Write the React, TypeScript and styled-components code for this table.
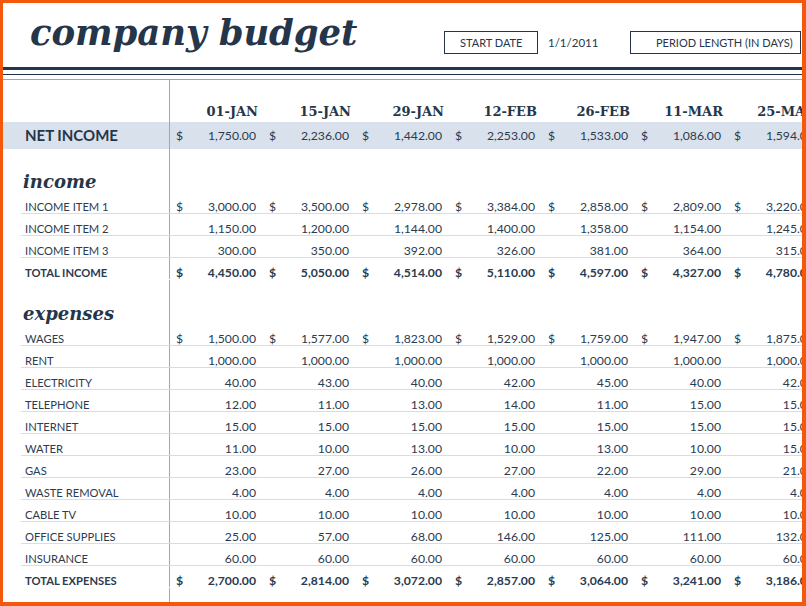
import React from 'react';
import styled, { createGlobalStyle, css } from 'styled-components';

const NAVY = '#25364a';
const TEXT = '#2b3b50';
const GRID = '#a6a6a6';
const RULE = '#d5dde8';

const GlobalStyle = createGlobalStyle`
  html, body { margin: 0; padding: 0; background: #fff; }
  body { font-family: Lato, "Liberation Sans", sans-serif; color: ${TEXT}; }
`;

const Frame = styled.div`
  width: 806px;
  height: 606px;
  box-sizing: border-box;
  border-style: solid;
  border-color: #f4580c;
  border-width: 3px 4px 4px 3px;
  overflow: hidden;
  background: #fff;
  display: flex;
  flex-direction: column;
`;

const Header = styled.header`
  display: flex;
  align-items: flex-start;
  height: 64px;
  box-sizing: border-box;
  padding: 28px 0 0 27px;
  flex-shrink: 0;
`;

const Title = styled.h1`
  margin: -18px 0 0;
  width: 414px;
  flex-shrink: 0;
  font-family: "DejaVu Serif", Georgia, serif;
  font-style: italic;
  font-weight: bold;
  font-size: 35.5px;
  letter-spacing: -0.1px;
  line-height: 40px;
  color: ${NAVY};
  white-space: nowrap;
`;

const FieldBox = styled.div<{ $w: number; $pl: number }>`
  width: ${(p) => p.$w}px;
  height: 23px;
  box-sizing: border-box;
  flex-shrink: 0;
  border: 1px solid ${NAVY};
  padding-left: ${(p) => p.$pl}px;
  font-size: 11px;
  line-height: 21px;
  color: ${NAVY};
  white-space: nowrap;
`;

const FieldValue = styled.div`
  width: 82px;
  flex-shrink: 0;
  padding-left: 10px;
  font-size: 11.5px;
  line-height: 23px;
  color: ${NAVY};
`;

const ThickRule = styled.div`
  height: 3px;
  background: ${NAVY};
  flex-shrink: 0;
`;

const ThinRule = styled.div`
  height: 1px;
  margin-top: 4px;
  background: ${NAVY};
  flex-shrink: 0;
`;

const Sheet = styled.section`
  margin-top: 4px;
  border-top: 1px solid ${GRID};
  flex: 1;
  display: flex;
  flex-direction: column;
`;

const rowBase = css<{ $indent?: boolean }>`
  display: grid;
  grid-template-columns: ${(p) => (p.$indent ? 149 : 167)}px repeat(7, 93px);
  margin-left: ${(p) => (p.$indent ? 18 : 0)}px;
  box-sizing: border-box;
  flex-shrink: 0;
`;

const HeadRow = styled.div<{ $indent?: boolean }>`
  ${rowBase};
  height: 42px;
`;

const NetRow = styled.div<{ $indent?: boolean }>`
  ${rowBase};
  height: 27px;
  background: #d9e1ec;
`;

const SectionRow = styled.div<{ $indent?: boolean; $h: number }>`
  ${rowBase};
  height: ${(p) => p.$h}px;
`;

const ItemRow = styled.div<{ $indent?: boolean; $line?: boolean }>`
  ${rowBase};
  height: 22px;
  border-bottom: 1px solid ${(p) => (p.$line ? RULE : 'transparent')};
`;

const FillRow = styled.div<{ $indent?: boolean }>`
  ${rowBase};
  flex: 1;
`;

const LabelCell = styled.div`
  border-right: 1px solid ${GRID};
`;

const HeadCell = styled.div`
  padding: 23px 5px 0 0;
  text-align: right;
  font-family: "DejaVu Serif", Georgia, serif;
  font-weight: bold;
  font-size: 13px;
  line-height: 17px;
  color: ${NAVY};
  white-space: nowrap;
`;

const NetLabel = styled(LabelCell)`
  padding-left: 22px;
  font-weight: bold;
  font-size: 15px;
  line-height: 27px;
  color: ${NAVY};
`;

const SectionLabel = styled(LabelCell)`
  display: flex;
  align-items: flex-end;
  padding-left: 20px;
  font-family: "DejaVu Serif", Georgia, serif;
  font-style: italic;
  font-weight: bold;
  font-size: 18px;
  line-height: 20px;
  color: ${NAVY};
`;

const ItemLabel = styled(LabelCell)<{ $bold?: boolean }>`
  padding: 8px 0 0 4px;
  font-size: 11.2px;
  line-height: 13px;
  font-weight: ${(p) => (p.$bold ? 700 : 400)};
  color: ${TEXT};
  white-space: nowrap;
`;

const ValueCell = styled.div<{ $bold?: boolean; $tall?: boolean }>`
  display: flex;
  justify-content: space-between;
  padding: ${(p) => (p.$tall ? '0 7px 0 6px' : '8px 7px 0 6px')};
  font-size: 12.2px;
  line-height: ${(p) => (p.$tall ? '27px' : '13px')};
  font-weight: ${(p) => (p.$bold ? 700 : 400)};
  color: ${TEXT};
  white-space: nowrap;
`;

const COLS = ['01-JAN', '15-JAN', '29-JAN', '12-FEB', '26-FEB', '11-MAR', '25-MAR'];

const fmt = (n: number) =>
  n.toLocaleString('en-US', { minimumFractionDigits: 2, maximumFractionDigits: 2 });

type Line = { label: string; values: number[]; dollar?: boolean };

const NET = [1750, 2236, 1442, 2253, 1533, 1086, 1594];

const INCOME: Line[] = [
  { label: 'INCOME ITEM 1', values: [3000, 3500, 2978, 3384, 2858, 2809, 3220], dollar: true },
  { label: 'INCOME ITEM 2', values: [1150, 1200, 1144, 1400, 1358, 1154, 1245] },
  { label: 'INCOME ITEM 3', values: [300, 350, 392, 326, 381, 364, 315] },
];
const TOTAL_INCOME = [4450, 5050, 4514, 5110, 4597, 4327, 4780];

const EXPENSES: Line[] = [
  { label: 'WAGES', values: [1500, 1577, 1823, 1529, 1759, 1947, 1875], dollar: true },
  { label: 'RENT', values: [1000, 1000, 1000, 1000, 1000, 1000, 1000] },
  { label: 'ELECTRICITY', values: [40, 43, 40, 42, 45, 40, 42] },
  { label: 'TELEPHONE', values: [12, 11, 13, 14, 11, 15, 15] },
  { label: 'INTERNET', values: [15, 15, 15, 15, 15, 15, 15] },
  { label: 'WATER', values: [11, 10, 13, 10, 13, 10, 15] },
  { label: 'GAS', values: [23, 27, 26, 27, 22, 29, 21] },
  { label: 'WASTE REMOVAL', values: [4, 4, 4, 4, 4, 4, 4] },
  { label: 'CABLE TV', values: [10, 10, 10, 10, 10, 10, 10] },
  { label: 'OFFICE SUPPLIES', values: [25, 57, 68, 146, 125, 111, 132] },
  { label: 'INSURANCE', values: [60, 60, 60, 60, 60, 60, 60] },
];
const TOTAL_EXPENSES = [2700, 2814, 3072, 2857, 3064, 3241, 3186];

const Values = ({ values, dollar, bold }: { values: number[]; dollar?: boolean; bold?: boolean }) => (
  <>
    {values.map((v, i) => (
      <ValueCell key={i} $bold={bold}>
        <span>{dollar ? '$' : ''}</span>
        <span>{fmt(v)}</span>
      </ValueCell>
    ))}
  </>
);

const Emptys = () => (
  <>
    {COLS.map((c) => (
      <div key={c} />
    ))}
  </>
);

export default function App() {
  return (
    <>
      <GlobalStyle />
      <Frame>
        <Header>
          <Title>company budget</Title>
          <FieldBox $w={94} $pl={15}>START DATE</FieldBox>
          <FieldValue>1/1/2011</FieldValue>
          <FieldBox $w={171} $pl={25}>PERIOD LENGTH (IN DAYS)</FieldBox>
        </Header>
        <ThickRule />
        <ThinRule />
        <Sheet>
          <HeadRow>
            <LabelCell />
            {COLS.map((c) => (
              <HeadCell key={c}>{c}</HeadCell>
            ))}
          </HeadRow>
          <NetRow>
            <NetLabel>NET INCOME</NetLabel>
            {NET.map((v, i) => (
              <ValueCell key={i} $tall>
                <span>$</span>
                <span>{fmt(v)}</span>
              </ValueCell>
            ))}
          </NetRow>

          <SectionRow $h={43}>
            <SectionLabel>income</SectionLabel>
            <Emptys />
          </SectionRow>
          {INCOME.map((l) => (
            <ItemRow key={l.label} $indent $line>
              <ItemLabel>{l.label}</ItemLabel>
              <Values values={l.values} dollar={l.dollar} />
            </ItemRow>
          ))}
          <ItemRow $indent>
            <ItemLabel $bold>TOTAL INCOME</ItemLabel>
            <Values values={TOTAL_INCOME} dollar bold />
          </ItemRow>

          <SectionRow $h={44}>
            <SectionLabel>expenses</SectionLabel>
            <Emptys />
          </SectionRow>
          {EXPENSES.map((l) => (
            <ItemRow key={l.label} $indent $line>
              <ItemLabel>{l.label}</ItemLabel>
              <Values values={l.values} dollar={l.dollar} />
            </ItemRow>
          ))}
          <ItemRow $indent>
            <ItemLabel $bold>TOTAL EXPENSES</ItemLabel>
            <Values values={TOTAL_EXPENSES} dollar bold />
          </ItemRow>
          <FillRow>
            <LabelCell />
            <Emptys />
          </FillRow>
        </Sheet>
      </Frame>
    </>
  );
}
